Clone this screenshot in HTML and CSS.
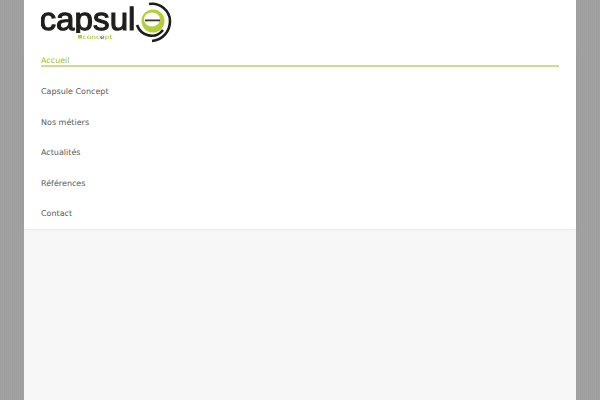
FILE: index.html
```html
<!DOCTYPE html>
<html lang="fr">
<head>
<meta charset="utf-8">
<title>Capsule Concept</title>
<link rel="stylesheet" href="styles.css">
</head>
<body>
<div class="page">
  <header class="header">
    <svg class="logo" width="135" height="48" viewBox="0 0 135 48" aria-label="capsule concept">
      <defs>
        <clipPath id="word-clip"><rect x="-2" y="0" width="110" height="33"/></clipPath>
      </defs>
      <g clip-path="url(#word-clip)">
        <text class="logo-word" x="-1.500" y="30" textLength="96" lengthAdjust="spacingAndGlyphs">capsul</text>
      </g>
      <circle cx="112" cy="21" r="11.500" fill="#b5cf3c"/>
      <ellipse cx="111" cy="19.500" rx="8" ry="7" fill="#fff"/>
      <rect x="104" y="19.500" width="15" height="1.800" fill="#3a3a30"/>
      <path d="M108 4 C119 2 129 11 129 21 C129 31 122 40 111 41" fill="none" stroke="#1d1d1b" stroke-width="2.600"/>
      <path d="M96 25 C100 36 114 40 122 30" fill="none" stroke="#1d1d1b" stroke-width="2.600"/>
      <rect x="37" y="35" width="4" height="3.500" fill="#b5cf3c"/>
      <text class="logo-sub" x="41.500" y="38.500" textLength="30" lengthAdjust="spacingAndGlyphs">conc<tspan class="logo-sub-dark">e</tspan>pt</text>
    </svg>
  </header>
  <nav class="nav">
    <a class="item active">Accueil</a>
    <a class="item">Capsule Concept</a>
    <a class="item">Nos métiers</a>
    <a class="item">Actualités</a>
    <a class="item">Références</a>
    <a class="item">Contact</a>
  </nav>
  <div class="rest"></div>
</div>
</body>
</html>
```
FILE: styles.css
```css
html, body {
  margin: 0;
  height: 100%;
  overflow: hidden;
}
body {
  font-family: "DejaVu Sans", sans-serif;
  font-size: 8px;
  text-rendering: geometricPrecision;
  background-color: #a0a0a0;
  background-image: repeating-linear-gradient(90deg, #9e9e9e 0 1px, #a2a2a2 1px 2px);
}
.page {
  width: 552px;
  height: 400px;
  margin: 0 auto;
  display: flex;
  flex-direction: column;
  background: #f7f7f7;
}
.header {
  background: #fff;
  height: 48px;
  padding-left: 17px;
  box-sizing: border-box;
  flex: none;
}
.logo {
  display: block;
  filter: blur(0.3px);
}
.logo-word {
  font-family: "Liberation Sans", sans-serif;
  font-size: 32px;
  fill: #1d1d1b;
  stroke: #1d1d1b;
  stroke-width: 1.1px;
}
.logo-sub {
  font-family: "DejaVu Sans", sans-serif;
  font-size: 6px;
  fill: #a9c233;
}
.logo-sub-dark {
  fill: #444;
}
.nav {
  background: #fff;
  padding: 0 17px;
  height: 181px;
  flex: none;
  display: flex;
  flex-direction: column;
  box-shadow: 0 1px 2px rgba(0,0,0,0.06);
}
.item {
  display: block;
  flex: none;
  height: 30.6px;
  line-height: 26px;
  color: #595959;
}
.item.active {
  height: 17px;
  margin-bottom: 12px;
  color: #a3bd31;
  border-bottom: 2px solid #cbdd8c;
}
.rest {
  flex: 1;
}
```
